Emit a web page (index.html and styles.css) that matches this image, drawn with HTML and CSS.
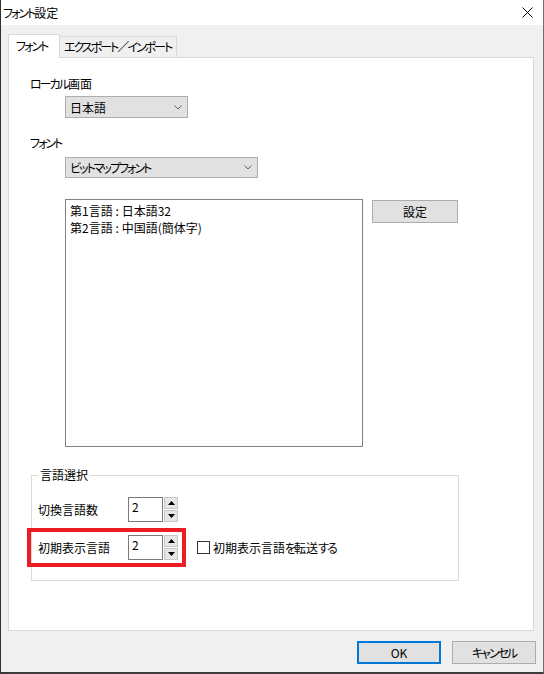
FILE: index.html
```html
<!DOCTYPE html>
<html lang="ja">
<head>
    <meta charset="UTF-8">
    <title>フォント設定</title>
    <link rel="stylesheet" href="styles.css">
</head>
<body>
    <div class="window">
        <div class="titlebar">
            <span class="title"><span class="k">フォント</span>設定</span>
            <svg class="close" width="11" height="11" viewBox="0 0 11 11">
                <path d="M0.5 0.5 L10.5 10.5 M10.5 0.5 L0.5 10.5" stroke="#000" stroke-width="1" fill="none"/>
            </svg>
        </div>

        <div class="tabs">
            <div class="tab active"><span class="k">フォント</span></div>
            <div class="tab"><span class="k">エクスポート／インポート</span></div>
        </div>

        <div class="panel">
            <div class="label label-local"><span class="k">ローカル</span>画面</div>
            <div class="combo combo-lang">
                <span>日本語</span>
                <svg class="arrow" width="8" height="5" viewBox="0 0 8 5"><path d="M0.5 0.5 L4 4 L7.5 0.5" stroke="#606060" fill="none"/></svg>
            </div>

            <div class="label label-font"><span class="k">フォント</span></div>
            <div class="combo combo-font">
                <span class="k">ビットマップフォント</span>
                <svg class="arrow" width="8" height="5" viewBox="0 0 8 5"><path d="M0.5 0.5 L4 4 L7.5 0.5" stroke="#606060" fill="none"/></svg>
            </div>

            <div class="list-row">
                <div class="listbox">
                    <div>第1言語<span class="sep">:</span>日本語32</div>
                    <div>第2言語<span class="sep">:</span>中国語(簡体字)</div>
                </div>
                <button class="btn btn-set">設定</button>
            </div>

            <fieldset class="group">
                <legend>言語選択</legend>
                <div class="spin-row">
                    <span class="spin-label">切換言語数</span>
                    <span class="spin-input">2</span>
                    <span class="spin-btns">
                        <span class="spin-up"><svg width="7" height="4" viewBox="0 0 7 4"><path d="M3.5 0 L7 4 L0 4 Z" fill="#000"/></svg></span>
                        <span class="spin-down"><svg width="7" height="4" viewBox="0 0 7 4"><path d="M0 0 L7 0 L3.5 4 Z" fill="#000"/></svg></span>
                    </span>
                </div>
                <div class="spin-row second">
                    <div class="mark">
                        <span class="spin-label">初期表示言語</span>
                        <span class="spin-input">2</span>
                        <span class="spin-btns">
                            <span class="spin-up"><svg width="7" height="4" viewBox="0 0 7 4"><path d="M3.5 0 L7 4 L0 4 Z" fill="#000"/></svg></span>
                            <span class="spin-down"><svg width="7" height="4" viewBox="0 0 7 4"><path d="M0 0 L7 0 L3.5 4 Z" fill="#000"/></svg></span>
                        </span>
                    </div>
                    <span class="check"></span>
                    <span class="check-label">初期表示言語<span class="k">を</span>転送<span class="k">する</span></span>
                </div>
            </fieldset>
        </div>

        <div class="footer">
            <button class="btn btn-ok">OK</button>
            <button class="btn btn-cancel"><span class="k">キャンセル</span></button>
        </div>
    </div>
</body>
</html>
```

FILE: styles.css
```css
body{
    margin: 0;
    font-family: "Noto Sans CJK JP", "Noto Sans", sans-serif;
    font-size: 12px;
    font-feature-settings: "palt";
    color: #000;
}
/* kana are narrow in the dialog font */
.k{
    letter-spacing: -2px;
}
.window{
    width: 544px;
    height: 674px;
    box-sizing: border-box;
    background: #f0f0f0;
    border-left: 1px solid #2f2f2f;
    border-right: 1px solid #6e6e6e;
    border-bottom: 2px solid #3c3c3c;
}
.titlebar{
    height: 25px;
    background: #fff;
    display: flex;
    align-items: center;
    justify-content: space-between;
    padding: 0 10px 0 2px;
}
.title{
    line-height: 16px;
}
.close{
    display: block;
}

/* tabs */
.tabs{
    display: flex;
    align-items: flex-end;
    height: 23px;
    margin-top: 9px;
    padding-left: 7px;
}
.tab{
    box-sizing: border-box;
    height: 21px;
    line-height: 20px;
    padding: 0 4px;
    white-space: nowrap;
    border: 1px solid #d9d9d9;
    border-bottom: none;
    background: #f0f0f0;
}
.tab.active{
    width: 52px;
    height: 24px;
    margin-bottom: -1px;
    padding-left: 7px;
    position: relative;
    z-index: 1;
    background: #fff;
    line-height: 22px;
}
.tab + .tab{
    width: 117px;
    border-left: none;
}

/* panel */
.panel{
    box-sizing: border-box;
    width: 526px;
    height: 574px;
    margin-left: 7px;
    background: #fff;
    border: 1px solid #d9d9d9;
    padding-top: 18px;
}
.label{
    line-height: 16px;
    margin-left: 21px;
}
.label-font{
    margin-top: 17px;
}
.combo{
    box-sizing: border-box;
    display: flex;
    align-items: center;
    justify-content: space-between;
    margin-left: 56px;
    padding: 0 5px 0 4px;
    background: #e1e1e1;
    border: 1px solid #adadad;
}
.combo-lang{
    width: 123px;
    height: 22px;
    margin-top: 4px;
}
.combo-font{
    width: 193px;
    height: 21px;
    margin-top: 6px;
}
.arrow{
    display: block;
}

.list-row{
    display: flex;
    align-items: flex-start;
    margin: 21px 0 0 56px;
}
.listbox{
    box-sizing: border-box;
    width: 298px;
    height: 248px;
    border: 1px solid #828282;
    padding: 2px 4px;
    line-height: 17px;
}
.sep{
    display: inline-block;
    width: 9px;
    text-align: center;
}
.btn{
    box-sizing: border-box;
    height: 23px;
    font-family: inherit;
    font-size: 12px;
    font-feature-settings: "palt";
    color: #000;
    background: #e1e1e1;
    border: 1px solid #adadad;
    padding: 0;
}
.btn-set{
    width: 86px;
    margin: 1px 0 0 9px;
}

/* group box */
.group{
    box-sizing: border-box;
    width: 428px;
    margin: 20px 0 0 22px;
    padding: 0 0 13px 0;
    border: 1px solid #dcdcdc;
}
.group legend{
    margin-left: 6px;
    padding: 0 2px;
    line-height: 16px;
}
.spin-row{
    display: flex;
    align-items: center;
    margin-top: 14px;
    padding-left: 6px;
}
.spin-row.second{
    margin-top: 6px;
    padding-left: 0;
}
.spin-label{
    width: 90px;
    line-height: 16px;
}
.spin-input{
    box-sizing: border-box;
    width: 35px;
    height: 25px;
    border: 1px solid #7a7a7a;
    padding: 1px 3px;
    line-height: 16px;
}
.spin-btns{
    display: flex;
    flex-direction: column;
    gap: 1px;
    margin-left: 1px;
}
.spin-up,
.spin-down{
    box-sizing: border-box;
    width: 14px;
    height: 12px;
    display: flex;
    align-items: center;
    justify-content: center;
    background: #e6e6e6;
    border: 1px solid #c8c8c8;
}
.spin-up svg,
.spin-down svg{
    display: block;
}
.mark{
    box-sizing: border-box;
    display: flex;
    align-items: center;
    height: 39px;
    margin-left: -5px;
    padding: 0 4px 0 7px;
    border: 4px solid #ed1c24;
}
.check{
    box-sizing: border-box;
    width: 13px;
    height: 13px;
    margin-left: 11px;
    border: 1px solid #333;
    background: #fff;
}
.check-label{
    margin-left: 3px;
    line-height: 16px;
}

/* footer */
.footer{
    display: flex;
    justify-content: flex-end;
    gap: 11px;
    margin-top: 10px;
    padding-right: 7px;
}
.btn-ok,
.btn-cancel{
    width: 84px;
}
.btn-ok{
    border-color: #0078d7;
    box-shadow: inset 0 0 0 1px #0078d7;
}
```
